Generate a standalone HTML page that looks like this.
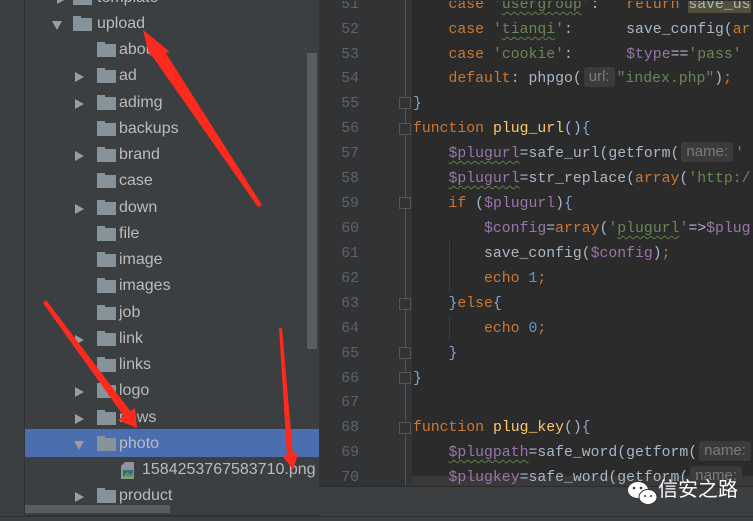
<!DOCTYPE html>
<html><head><meta charset="utf-8"><style>
*{margin:0;padding:0;box-sizing:border-box}
body{width:753px;height:521px;overflow:hidden;background:#3c3f41;position:relative;font-family:"Liberation Sans",sans-serif}
.left{position:absolute;left:0;top:0;width:319px;height:521px;background:#3c3f41}
.lstrip{position:absolute;left:0;top:0;width:25px;height:521px;background:#3c3f41;border-right:1px solid #323232}
.tree{position:absolute;left:0;top:2px;width:319px;height:519px}
.row{position:absolute;left:25px;width:294px;height:26px;color:#bbbbbb;font-size:16px;line-height:26px}
.row.sel{background:#4b6eaf}
.row .t{position:absolute}
.exp{position:absolute;top:9px;width:0;height:0;border-top:5px solid transparent;border-bottom:5px solid transparent;border-left:9px solid #9a9c9e}
.expd{position:absolute;top:10px;width:0;height:0;border-left:5px solid transparent;border-right:5px solid transparent;border-top:9px solid #9a9c9e}
.fold{position:absolute;top:7px;width:19px;height:13px;background:#87939a}
.fold:before{content:"";position:absolute;left:0;top:-2px;width:8px;height:3px;background:#87939a}
.vscroll{position:absolute;left:307px;top:53px;width:10px;height:296px;background:#5a5c5e}
.hscroll{position:absolute;left:25px;top:505px;width:145px;height:8px;background:#5a5c5e}
.gutter{position:absolute;left:319px;top:0;width:93px;height:486px;background:#313335}
.gline{position:absolute;left:405px;top:0;width:1px;height:486px;background:#555}
.code{position:absolute;left:412px;top:0;width:341px;height:486px;background:#2b2b2b}
.cw{position:absolute;left:0;top:1px;width:753px;height:485px;overflow:hidden}
.ln{position:absolute;left:319px;width:40px;text-align:right;color:#606366;font:14.8px/25px "Liberation Mono",monospace}
.cl{position:absolute;left:413px;white-space:pre;color:#a9b7c6;font:14.8px/25px "Liberation Mono",monospace}
.k{color:#cc7832}.s{color:#6a8759}.v{color:#9876aa}.f{color:#ffc66d}.n{color:#6897bb}.b{color:#7ea6d6}
.u{text-decoration:underline wavy #5f7d4a;text-decoration-thickness:1px;text-underline-offset:3px}
.h{display:inline-block;background:#3b3b3b;color:#7b7b7b;font:15px/20px "Liberation Sans",sans-serif;padding:0 5px;border-radius:3px;margin:0 2px;vertical-align:1px}
.bottom{position:absolute;left:319px;top:486px;width:434px;height:30px;background:#3c3f41;border-top:1px solid #2b2b2b}
.fm{position:absolute;left:399px;width:12px;height:12px;border:1px solid #555;background:#313335}
.ig{position:absolute;width:1px;background:#3b3b3b}
</style></head><body>
<div class="left"></div><div class="lstrip"></div>

<div class="tree">
<div class="row" style="top:-17px"><span class="exp" style="left:32px"></span><span class="fold" style="left:48px"></span><span class="t" style="left:72px">template</span></div>
<div class="row" style="top:9px"><span class="expd" style="left:27px"></span><span class="fold" style="left:48px"></span><span class="t" style="left:72px">upload</span></div>
<div class="row" style="top:35px"><span class="fold" style="left:72px"></span><span class="t" style="left:94px">about</span></div>
<div class="row" style="top:61px"><span class="exp" style="left:50px"></span><span class="fold" style="left:72px"></span><span class="t" style="left:94px">ad</span></div>
<div class="row" style="top:88px"><span class="exp" style="left:50px"></span><span class="fold" style="left:72px"></span><span class="t" style="left:94px">adimg</span></div>
<div class="row" style="top:114px"><span class="fold" style="left:72px"></span><span class="t" style="left:94px">backups</span></div>
<div class="row" style="top:140px"><span class="exp" style="left:50px"></span><span class="fold" style="left:72px"></span><span class="t" style="left:94px">brand</span></div>
<div class="row" style="top:166px"><span class="fold" style="left:72px"></span><span class="t" style="left:94px">case</span></div>
<div class="row" style="top:193px"><span class="exp" style="left:50px"></span><span class="fold" style="left:72px"></span><span class="t" style="left:94px">down</span></div>
<div class="row" style="top:219px"><span class="fold" style="left:72px"></span><span class="t" style="left:94px">file</span></div>
<div class="row" style="top:245px"><span class="fold" style="left:72px"></span><span class="t" style="left:94px">image</span></div>
<div class="row" style="top:271px"><span class="fold" style="left:72px"></span><span class="t" style="left:94px">images</span></div>
<div class="row" style="top:298px"><span class="fold" style="left:72px"></span><span class="t" style="left:94px">job</span></div>
<div class="row" style="top:324px"><span class="exp" style="left:50px"></span><span class="fold" style="left:72px"></span><span class="t" style="left:94px">link</span></div>
<div class="row" style="top:350px"><span class="fold" style="left:72px"></span><span class="t" style="left:94px">links</span></div>
<div class="row" style="top:376px"><span class="exp" style="left:50px"></span><span class="fold" style="left:72px"></span><span class="t" style="left:94px">logo</span></div>
<div class="row" style="top:403px"><span class="exp" style="left:50px"></span><span class="fold" style="left:72px"></span><span class="t" style="left:94px">news</span></div>
<div class="row sel" style="top:427px;height:28px;line-height:30px"><span class="expd" style="left:49px;top:12px"></span><span class="fold" style="left:72px;top:9px"></span><span class="t" style="left:94px">photo</span></div>
<div class="row" style="top:455px"><svg style="position:absolute;left:96px;top:5px" width="14" height="17"><path d="M4 0H13V17H0V4Z" fill="#8d959a"/><rect x="2" y="8" width="10" height="7" fill="#3a6b7e"/><path d="M2 15L6 10L9 13L12 11V15Z" fill="#5a9a4a"/></svg><span class="t" style="left:117px">1584253767583710.png</span></div>
<div class="row" style="top:481px"><span class="exp" style="left:50px"></span><span class="fold" style="left:72px"></span><span class="t" style="left:94px">product</span></div>
</div>
<div class="vscroll"></div><div class="hscroll"></div>
<div style="position:absolute;left:25px;top:515px;width:294px;height:1px;background:#2f3133"></div>

<div class="gutter"></div><div class="code"></div><div class="gline"></div>
<div style="position:absolute;left:412px;top:476px;width:341px;height:10px;background:#393939"></div>

<div class="cw">
<div class="ig" style="left:449px;top:240px;height:50px"></div>
<div class="ig" style="left:449px;top:316px;height:24px"></div>

<div class="ln" style="top:-8px">51</div><div class="ln" style="top:17px">52</div><div class="ln" style="top:42px">53</div><div class="ln" style="top:66px">54</div><div class="ln" style="top:91px">55</div><div class="ln" style="top:116px">56</div><div class="ln" style="top:141px">57</div><div class="ln" style="top:166px">58</div><div class="ln" style="top:191px">59</div><div class="ln" style="top:216px">60</div><div class="ln" style="top:241px">61</div><div class="ln" style="top:266px">62</div><div class="ln" style="top:291px">63</div><div class="ln" style="top:316px">64</div><div class="ln" style="top:341px">65</div><div class="ln" style="top:366px">66</div><div class="ln" style="top:390px">67</div><div class="ln" style="top:415px">68</div><div class="ln" style="top:440px">69</div><div class="ln" style="top:465px">70</div>

<div class="fm" style="top:96px"></div><div class="fm" style="top:122px"></div><div class="fm" style="top:196px"></div><div class="fm" style="top:297px"></div><div class="fm" style="top:346px"></div><div class="fm" style="top:371px"></div><div class="fm" style="top:421px"></div>

<div class="cl" style="top:-8px">    <span class="k">case</span> <span class="s">'<span class="u">usergroup</span>'</span>:   <span class="k">return</span> <span style="background:#52503a">save_us</span></div>
<div class="cl" style="top:17px">    <span class="k">case</span> <span class="s">'<span class="u">tianqi</span>'</span>:      save_config(<span class="k">ar</span></div>
<div class="cl" style="top:42px">    <span class="k">case</span> <span class="s">'cookie'</span>:      <span class="v">$type</span>==<span class="s">'pass'</span></div>
<div class="cl" style="top:66px">    <span class="k">default</span>: phpgo(<span class="h">url:</span><span class="s">"index.php"</span>)<span class="k">;</span></div>
<div class="cl" style="top:91px"><span class="b">}</span></div>
<div class="cl" style="top:116px"><span class="k">function</span> <span class="f">plug_url</span>()<span class="b">{</span></div>
<div class="cl" style="top:141px">    <span class="v u">$plugurl</span>=safe_url(getform(<span class="h">name:</span><span class="s">'</span></div>
<div class="cl" style="top:166px">    <span class="v u">$plugurl</span>=str_replace(<span class="k">array</span>(<span class="s">'http:/</span></div>
<div class="cl" style="top:191px">    <span class="k">if</span> (<span class="v">$plugurl</span>)<span class="b">{</span></div>
<div class="cl" style="top:216px">        <span class="v">$config</span>=<span class="k">array</span>(<span class="s">'<span class="u">plugurl</span>'</span>=&gt;<span class="v">$plug</span></div>
<div class="cl" style="top:241px">        save_config(<span class="v">$config</span>)<span class="k">;</span></div>
<div class="cl" style="top:266px">        <span class="k">echo</span> <span class="n">1</span><span class="k">;</span></div>
<div class="cl" style="top:291px">    <span class="b">}</span><span class="k">else</span><span class="b">{</span></div>
<div class="cl" style="top:316px">        <span class="k">echo</span> <span class="n">0</span><span class="k">;</span></div>
<div class="cl" style="top:341px">    <span class="b">}</span></div>
<div class="cl" style="top:366px"><span class="b">}</span></div>
<div class="cl" style="top:415px"><span class="k">function</span> <span class="f">plug_key</span>()<span class="b">{</span></div>
<div class="cl" style="top:440px">    <span class="v u">$plugpath</span>=safe_word(getform(<span class="h">name:</span></div>
<div class="cl" style="top:465px">    <span class="v">$plugkey</span>=safe_word(getform(<span class="h">name:</span></div>
</div>

<div class="bottom"></div>
<div style="position:absolute;left:0;top:516px;width:753px;height:5px;background:#3c3f41;border-top:1px solid #2f3133"></div>

<svg style="position:absolute;left:625px;top:478px" width="40" height="32"><ellipse cx="13" cy="12" rx="10" ry="8" fill="#fff"/><ellipse cx="23" cy="19" rx="9" ry="7.5" fill="#fff" stroke="#333" stroke-width="1"/><circle cx="9" cy="10" r="1.3" fill="#333"/><circle cx="16" cy="10" r="1.3" fill="#333"/><circle cx="20" cy="18" r="1" fill="#333"/><circle cx="26" cy="18" r="1" fill="#333"/></svg>
<div style="position:absolute;left:658px;top:474px;color:#fff;font:20px/28px 'Noto Sans CJK SC',sans-serif">信安之路</div>

<svg style="position:absolute;left:0;top:0" width="753" height="521">
<g fill="#ff2a1e">
<polygon points="262,205 258,207 148,50 143,30 160,44"/>
<polygon points="143,30 170,52 150,56"/>
<polygon points="43,303 46,300 131,412 137,428 123,415"/>
<polygon points="137,428 118,420 135,408"/>
<polygon points="279,328 282,328 293,455 293,470 287,455"/>
<polygon points="293,470 282,455 298,454"/>
</g></svg>
</body></html>
